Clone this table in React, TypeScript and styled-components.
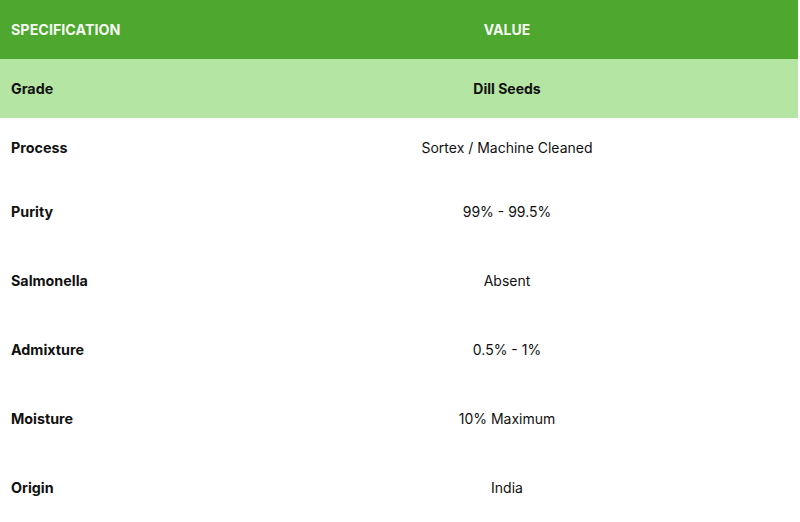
import React from "react";
import styled, { createGlobalStyle } from "styled-components";

const Global = createGlobalStyle`
  html, body { margin: 0; padding: 0; background: #ffffff; }
  body { font-family: Inter, "Open Sans", "Liberation Sans", sans-serif; }
`;

const Table = styled.div`
  width: 798px;
  display: flex;
  flex-direction: column;
`;

type Variant = "head" | "highlight" | "plain";

const Row = styled.div<{ $variant: Variant; $h: number }>`
  display: grid;
  grid-template-columns: 216px 1fr;
  align-items: center;
  height: ${(p) => p.$h}px;
  background: ${(p) =>
    p.$variant === "head" ? "#4ea72e" : p.$variant === "highlight" ? "#b5e5a3" : "#ffffff"};
  color: ${(p) => (p.$variant === "head" ? "#f4f9f2" : "#111111")};
`;

const Label = styled.div`
  padding-left: 11px;
  font-size: 14.3px;
  font-weight: 700;
`;

const Value = styled.div<{ $bold: boolean }>`
  text-align: center;
  font-size: 14px;
  font-weight: ${(p) => (p.$bold ? 700 : 400)};
`;

const rows: { label: string; value: string; variant: Variant; h: number }[] = [
  { label: "SPECIFICATION", value: "VALUE", variant: "head", h: 59 },
  { label: "Grade", value: "Dill Seeds", variant: "highlight", h: 59 },
  { label: "Process", value: "Sortex / Machine Cleaned", variant: "plain", h: 59 },
  { label: "Purity", value: "99% - 99.5%", variant: "plain", h: 69 },
  { label: "Salmonella", value: "Absent", variant: "plain", h: 69 },
  { label: "Admixture", value: "0.5% - 1%", variant: "plain", h: 69 },
  { label: "Moisture", value: "10% Maximum", variant: "plain", h: 69 },
  { label: "Origin", value: "India", variant: "plain", h: 69 },
];

export default function App() {
  return (
    <>
      <Global />
      <Table>
        {rows.map((r) => (
          <Row key={r.label} $variant={r.variant} $h={r.h}>
            <Label>{r.label}</Label>
            <Value $bold={r.variant !== "plain"}>{r.value}</Value>
          </Row>
        ))}
      </Table>
    </>
  );
}
